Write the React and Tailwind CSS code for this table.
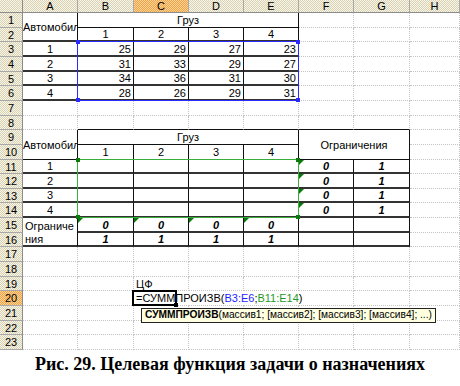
import React from 'react';

// gridline / border pieces (each cell draws its own right + bottom edge)
const R0 = 'border-r border-r-[#c4c4c4] [border-right-style:dotted]';
const R1 = 'border-r border-r-[#111111]';
const B0 = 'border-b border-b-[#c4c4c4] [border-bottom-style:dotted]';
const B1 = 'border-b border-b-[#111111]';
const B2 = 'border-b-2 border-b-[#333333]';

const HDR = 'bg-[image:repeating-conic-gradient(#d9d2b0_0%_25%,#f8f6ec_0%_50%)] bg-[length:2px_2px]';
const HDR_ON = 'bg-[image:repeating-conic-gradient(#f2a444_0%_25%,#fbd49c_0%_50%)] bg-[length:2px_2px]';

const cars = [
  [25, 29, 27, 23],
  [31, 33, 29, 27],
  [34, 36, 31, 30],
  [28, 26, 29, 31],
];

const gl = () => ({ cls: `${R0} ${B0}` });

const formula = (
  <>
    =СУММПРОИЗВ(<span className="text-[#1f1fff]">B3:E6</span>;<span className="text-[#1f9a1f]">B11:E14</span>)
  </>
);

function rowCells(r) {
  const cells = [];
  if (r === 1) {
    cells.push({ t: 'Автомобили', cls: `row-span-2 !px-0 ${R1} ${B2}` });
    cells.push({ t: 'Груз', cls: `col-span-4 justify-center ${R1} ${B1}` });
    cells.push(gl(), gl(), gl());
  } else if (r === 2) {
    [1, 2, 3, 4].forEach((n) => cells.push({ t: n, cls: `justify-center ${R1} ${B2}` }));
    cells.push(gl(), gl(), gl());
  } else if (r >= 3 && r <= 6) {
    cells.push({ t: r - 2, cls: `justify-center ${R1} ${B2}` });
    cars[r - 3].forEach((v) => cells.push({ t: v, cls: `justify-end ${R1} ${B2}` }));
    cells.push(gl(), gl(), gl());
  } else if (r === 8) {
    cells.push(gl());
    for (let i = 0; i < 6; i++) cells.push({ cls: `${R0} ${B1}` });
    cells.push(gl());
  } else if (r === 9) {
    cells.push({ t: 'Автомобили', cls: `row-span-2 !px-0 ${R1} ${B1}` });
    cells.push({ t: 'Груз', cls: `col-span-4 justify-center ${R1} ${B1}` });
    cells.push({ t: 'Ограничения', cls: `col-span-2 row-span-2 justify-center ${R1} ${B1}` });
    cells.push(gl());
  } else if (r === 10) {
    [1, 2, 3, 4].forEach((n) => cells.push({ t: n, cls: `justify-center ${R1} ${B1}` }));
    cells.push(gl());
  } else if (r >= 11 && r <= 14) {
    cells.push({ t: r - 10, cls: `justify-center ${R1} ${B2}` });
    for (let i = 0; i < 4; i++) cells.push({ cls: `${R1} ${B2}` });
    cells.push({ t: '0', cls: `justify-center font-bold italic ${R1} ${B2}`, tri: true });
    cells.push({ t: '1', cls: `justify-center font-bold italic ${R1} ${B2}` });
    cells.push(gl());
  } else if (r === 15 || r === 16) {
    cells.push(r === 15 ? { t: 'Ограниче', cls: R1 } : { t: 'ния', cls: `${R1} ${B2}` });
    for (let i = 0; i < 4; i++)
      cells.push({ t: r === 15 ? '0' : '1', cls: `justify-center font-bold italic ${R1} ${B2}`, tri: r === 15 });
    cells.push({ cls: `${R1} ${B2}` }, { cls: `${R1} ${B2}` });
    cells.push(gl());
  } else if (r === 19) {
    cells.push(gl(), gl(), { t: 'ЦФ', cls: `${R0} ${B0}` }, gl(), gl(), gl(), gl(), gl());
  } else if (r === 20) {
    cells.push(gl(), gl(), { t: formula, cls: `overflow-visible ${B0}` }, { cls: B0 }, { cls: B0 }, gl(), gl(), gl());
  } else {
    for (let i = 0; i < 8; i++) cells.push(gl());
  }
  return cells;
}

function Cell({ c }) {
  return (
    <div className={`relative flex items-center overflow-hidden whitespace-nowrap px-[2px] pt-[1px] ${c.cls}`}>
      {c.t}
      {c.tri && (
        <span className="absolute left-0 top-0 h-0 w-0 border-r-[5px] border-t-[5px] border-r-transparent border-t-[#0a7a0a]" />
      )}
    </div>
  );
}

export default function App() {
  const rows = Array.from({ length: 23 }, (_, i) => i + 1);
  const cols = ['A', 'B', 'C', 'D', 'E', 'F', 'G', 'H'];

  return (
    <div className="h-[386px] w-[460px] overflow-hidden bg-white font-['Liberation_Sans',Arial,sans-serif] text-[11px] text-black">
      <div className="relative grid h-[350px] grid-cols-[23px_55px_56px_55px_55px_55px_55px_56px_50px] grid-rows-[13px_15px_14px_15px_15px_14px_15px_15px_14px_15px_15px_14px_15px_14px_15px_15px_14px_15px_15px_14px_15px_15px_14px_15px]">
        {/* column headers */}
        <div className={`${HDR} border-b border-r border-b-[#8c8c8c] border-r-[#8c8c8c]`} />
        {cols.map((l) => (
          <div
            key={l}
            className={`${l === 'C' ? HDR_ON : HDR} flex items-center justify-center border-b border-r border-b-[#8c8c8c] border-r-[#a8a8a8] leading-none`}
          >
            {l}
          </div>
        ))}

        {rows.map((r) => (
          <React.Fragment key={r}>
            <div
              className={`${r === 20 ? HDR_ON : HDR} flex items-center justify-center border-b border-r border-b-[#a8a8a8] border-r-[#8c8c8c] pt-[1px] leading-none`}
            >
              {r}
            </div>
            {rowCells(r).map((c, i) => (
              <Cell key={i} c={c} />
            ))}
          </React.Fragment>
        ))}

        {/* reference ranges of the formula */}
        <div className="pointer-events-none absolute col-start-3 col-end-7 row-start-4 row-end-8 -left-px -top-px bottom-0 right-0 border border-[#2a2aff]">
          <span className="absolute -left-[2px] -top-[2px] h-[4px] w-[4px] bg-[#2a2aff]" />
          <span className="absolute -right-[2px] -top-[2px] h-[4px] w-[4px] bg-[#2a2aff]" />
          <span className="absolute -bottom-[2px] -left-[2px] h-[4px] w-[4px] bg-[#2a2aff]" />
          <span className="absolute -bottom-[2px] -right-[2px] h-[4px] w-[4px] bg-[#2a2aff]" />
        </div>
        <div className="pointer-events-none absolute col-start-3 col-end-7 row-start-12 row-end-16 -left-px -top-px bottom-0 right-0 border border-[#3aae3a]">
          <span className="absolute -left-[2px] -top-[2px] h-[4px] w-[4px] bg-[#0a7a0a]" />
          <span className="absolute -right-[2px] -top-[2px] h-[4px] w-[4px] bg-[#0a7a0a]" />
          <span className="absolute -bottom-[2px] -left-[2px] h-[4px] w-[4px] bg-[#0a7a0a]" />
          <span className="absolute -bottom-[2px] -right-[2px] h-[4px] w-[4px] bg-[#0a7a0a]" />
        </div>

        {/* active cell C20 */}
        <div className="pointer-events-none absolute col-start-4 row-start-21 -left-[2px] -top-[1px] h-[16px] w-[45px] border-2 border-black">
          <span className="absolute -bottom-[3px] -right-[3px] h-[4px] w-[4px] bg-black" />
        </div>

        {/* function tooltip */}
        <div className="absolute left-[141px] top-[308px] flex h-[15px] items-center whitespace-nowrap border border-[#222] bg-[#ffffe1] px-[3px] text-[10.2px] leading-none">
          <b>СУММПРОИЗВ</b>(массив1; [массив2]; [массив3]; [массив4]; ...)
        </div>
      </div>

      <div className="flex h-[36px] items-start justify-center pt-[1px] font-['Liberation_Serif',serif] text-[18px] font-bold leading-normal">
        Рис. 29. Целевая функция задачи о назначениях
      </div>
    </div>
  );
}
